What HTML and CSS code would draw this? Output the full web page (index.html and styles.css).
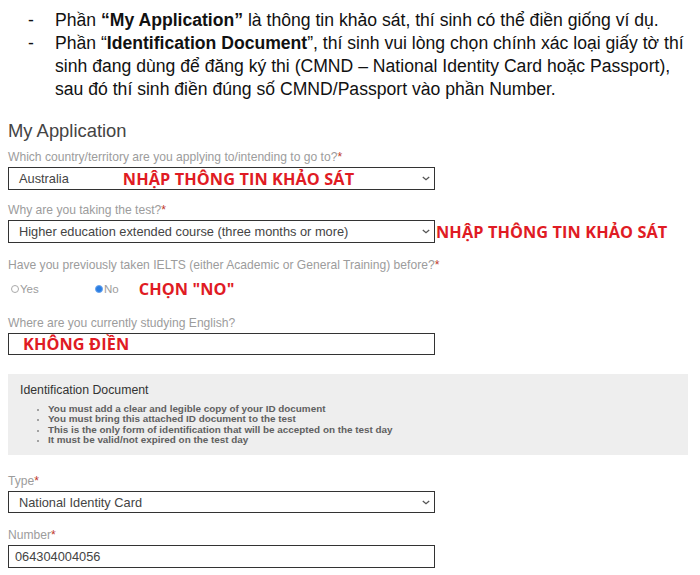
FILE: index.html
```html
<!DOCTYPE html>
<html lang="vi">
<head>
<meta charset="utf-8">
<link rel="stylesheet" href="styles.css">
</head>
<body>
<ul class="notes">
  <li><span class="dash">-</span><span>Phần <b>“My Application”</b> là thông tin khảo sát, thí sinh có thể điền giống ví dụ.</span></li>
  <li><span class="dash">-</span><span>Phần “<b>Identification Document</b>”, thí sinh vui lòng chọn chính xác loại giấy tờ thí<br>sinh đang dùng để đăng ký thi (CMND – National Identity Card hoặc Passport),<br>sau đó thí sinh điền đúng số CMND/Passport vào phần Number.</span></li>
</ul>

<div class="form">
  <h2 class="title">My Application</h2>

  <div class="field f1">
    <div class="label">Which country/territory are you applying to/intending to go to?<span class="req">*</span></div>
    <div class="row">
      <div class="select">
        <span class="value">Australia</span>
        <span class="note note-inline">NHẬP THÔNG TIN KHẢO SÁT</span>
        <svg class="chev" viewBox="0 0 10 6" width="8" height="5"><path d="M1 1 L5 4.5 L9 1" fill="none" stroke="#555" stroke-width="1.6"/></svg>
      </div>
    </div>
  </div>

  <div class="field f2">
    <div class="label">Why are you taking the test?<span class="req">*</span></div>
    <div class="row">
      <div class="select">
        <span class="value">Higher education extended course (three months or more)</span>
        <svg class="chev" viewBox="0 0 10 6" width="8" height="5"><path d="M1 1 L5 4.5 L9 1" fill="none" stroke="#555" stroke-width="1.6"/></svg>
      </div>
      <span class="note note-side">NHẬP THÔNG TIN KHẢO SÁT</span>
    </div>
  </div>

  <div class="field f3">
    <div class="label">Have you previously taken IELTS (either Academic or General Training) before?<span class="req">*</span></div>
    <div class="radios">
      <span class="radio"><span class="dot"></span>Yes</span>
      <span class="radio checked"><span class="dot"></span>No</span>
      <span class="note note-radio">CHỌN "NO"</span>
    </div>
  </div>

  <div class="field f4">
    <div class="label">Where are you currently studying English?</div>
    <div class="input input-note"><span class="note">KHÔNG ĐIỀN</span></div>
  </div>
</div>

<div class="idbox">
  <div class="idtitle">Identification Document</div>
  <ul class="idlist">
    <li>You must add a clear and legible copy of your ID document</li>
    <li>You must bring this attached ID document to the test</li>
    <li>This is the only form of identification that will be accepted on the test day</li>
    <li>It must be valid/not expired on the test day</li>
  </ul>
</div>

<div class="form">
  <div class="field f5">
    <div class="label">Type<span class="req">*</span></div>
    <div class="select select-type">
      <span class="value">National Identity Card</span>
      <svg class="chev" viewBox="0 0 10 6" width="8" height="5"><path d="M1 1 L5 4.5 L9 1" fill="none" stroke="#555" stroke-width="1.6"/></svg>
    </div>
  </div>
  <div class="field f6">
    <div class="label">Number<span class="req">*</span></div>
    <div class="input input-number"><span class="value">064304004056</span></div>
  </div>
</div>
</body>
</html>
```
FILE: styles.css
```css
html, body {
  margin: 0;
  padding: 0;
  background: #fff;
}
body {
  font-family: "Liberation Sans", Arial, sans-serif;
  color: #333;
  width: 700px;
  height: 575px;
  overflow: hidden;
}
.notes {
  list-style: none;
  margin: 0;
  padding: 9px 0 0 0;
  font-size: 17.6px;
  line-height: 23px;
  color: #111;
}
.notes li {
  display: flex;
  white-space: nowrap;
}
.notes .dash {
  width: 55px;
  padding-left: 28px;
  box-sizing: border-box;
  flex: none;
}
.notes b {
  font-weight: bold;
}
.form {
  padding: 0 8px;
}
.title {
  margin: 19px 0 0;
  font-size: 18.4px;
  font-weight: normal;
  line-height: 22px;
  color: #444;
}
.f1 { margin-top: 8px; }
.f2 { margin-top: 13px; }
.f3 { margin-top: 15px; }
.f4 { margin-top: 13px; }
.f5 { margin-top: 19px; }
.f6 { margin-top: 15px; }
.label {
  font-size: 12.1px;
  line-height: 14px;
  color: #9c9c9c;
  margin-bottom: 3px;
  white-space: nowrap;
}
.req {
  color: #c0392b;
}
.row {
  display: flex;
  align-items: center;
}
.select, .input {
  width: 427px;
  height: 23px;
  box-sizing: border-box;
  border: 1px solid #333;
  display: flex;
  align-items: center;
  padding: 0 4px 0 10px;
  font-size: 12.8px;
  color: #444;
  flex: none;
  white-space: nowrap;
}
.select .value {
  flex: none;
}
.chev {
  margin-left: auto;
}
.note {
  font-family: "Open Sans", "Noto Sans", sans-serif;
  font-weight: bold;
  color: #e01b24;
  font-size: 16.3px;
  letter-spacing: 0.1px;
  white-space: nowrap;
}
.note-inline {
  margin-left: 54px;
}
.note-side {
  margin-left: 1px;
}
.radios {
  display: flex;
  align-items: center;
  height: 28px;
  padding-left: 3px;
  font-size: 11.5px;
  color: #9c9c9c;
}
.radio {
  display: inline-flex;
  align-items: center;
}
.radio:first-child {
  width: 84px;
}
.dot {
  width: 6px;
  height: 6px;
  border-radius: 50%;
  border: 1px solid #aaa;
  margin-right: 1px;
}
.radio.checked .dot {
  background: #2a7de1;
  border-color: #6aa5ee;
}
.note-radio {
  margin-left: 20px;
}
.input-note {
  padding-left: 14px;
  height: 22px;
}
.idbox {
  margin: 19px 12px 0 8px;
  background: #eeeeee;
  padding: 9px 12px 0;
  height: 81px;
  box-sizing: border-box;
}
.idtitle {
  font-size: 12.3px;
  color: #333;
  line-height: 14px;
}
.idlist {
  margin: 7px 0 0;
  padding: 0 0 0 28px;
  font-size: 9.9px;
  line-height: 10.4px;
  font-weight: bold;
  color: #606060;
}
.idlist li::marker {
  color: #888;
  font-size: 8px;
}
.select-type {
  height: 22px;
}
.input-number {
  padding-left: 6px;
  height: 23px;
}
```
